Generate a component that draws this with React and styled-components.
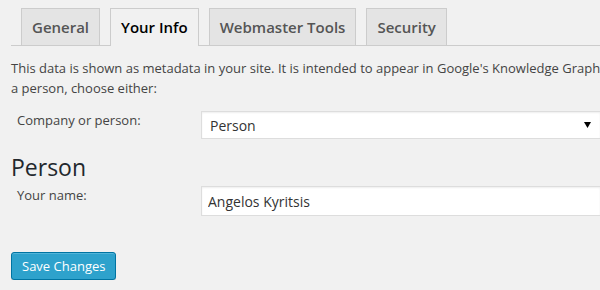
import React from "react";
import styled, { createGlobalStyle } from "styled-components";

const Global = createGlobalStyle`
  html, body { margin: 0; padding: 0; background: #f1f1f1; overflow: hidden; }
  body { font-family: "Open Sans", "Liberation Sans", sans-serif; color: #444; font-size: 13px; }
`;

const Wrap = styled.div`
  width: 900px;
  padding: 8px 0 0 11px;
`;

const TabBar = styled.nav`
  display: flex;
  align-items: flex-end;
  gap: 10px;
  padding-left: 10px;
  border-bottom: 1px solid #ccc;
  height: 37px;
`;

const Tab = styled.a`
  box-sizing: border-box;
  height: 37px;
  padding: 6px 10px 0;
  line-height: 24px;
  font-size: 15px;
  font-weight: 600;
  border: 1px solid #ccc;
  border-bottom: none;
  background: ${(p) => (p.$active ? "#f1f1f1" : "#e4e4e4")};
  color: ${(p) => (p.$active ? "#000" : "#555")};
  margin-bottom: ${(p) => (p.$active ? "-1px" : "0")};
  height: ${(p) => (p.$active ? "38px" : "37px")};
  text-decoration: none;
  white-space: nowrap;
`;

const Intro = styled.p`
  margin: 13px 0 13px;
  line-height: 19.5px;
  font-size: 13px;
  color: #444;
  white-space: nowrap;
`;

const Row = styled.div`
  display: grid;
  grid-template-columns: 190px 400px;
  align-items: start;
`;

const Label = styled.label`
  padding-left: 6px;
  line-height: 19.5px;
  font-size: 13px;
  color: #444;
`;

const SelectBox = styled.div`
  position: relative;
  box-sizing: border-box;
  height: 28px;
  background: #fff;
  border: 1px solid #ddd;
  box-shadow: inset 0 1px 2px rgba(0, 0, 0, 0.07);
  display: flex;
  align-items: center;
  padding-left: 8px;
  font-size: 14px;
  color: #333;
`;

const Arrow = styled.svg`
  position: absolute;
  right: 9px;
  top: 10px;
`;

const Heading = styled.h2`
  margin: 14px 0 4px;
  font-size: 23px;
  font-weight: 400;
  line-height: 29px;
  color: #23282d;
`;

const TextInput = styled.input`
  box-sizing: border-box;
  height: 30px;
  width: 400px;
  margin: 0;
  background: #fff;
  border: 1px solid #ddd;
  box-shadow: inset 0 1px 2px rgba(0, 0, 0, 0.07);
  padding: 0 6px;
  font-family: "Open Sans", "Liberation Sans", sans-serif;
  font-size: 14px;
  color: #333;
  outline: none;
`;

const Button = styled.button`
  margin-top: 36px;
  box-sizing: border-box;
  height: 28px;
  padding: 0 10px 1px;
  line-height: 26px;
  font-family: "Open Sans", "Liberation Sans", sans-serif;
  font-size: 13px;
  color: #fff;
  background: #2ea2cc;
  border: 1px solid #0074a2;
  border-radius: 3px;
  box-shadow: inset 0 1px 0 rgba(120, 200, 230, 0.5), 0 1px 0 rgba(0, 0, 0, 0.15);
  cursor: pointer;
`;

export default function App() {
  return (
    <>
      <Global />
      <Wrap>
        <TabBar>
          <Tab>General</Tab>
          <Tab $active>Your Info</Tab>
          <Tab>Webmaster Tools</Tab>
          <Tab>Security</Tab>
        </TabBar>
        <Intro>
          This data is shown as metadata in your site. It is intended to appear in Google's Knowledge Graph. You can be either a company, or
          <br />
          a person, choose either:
        </Intro>
        <Row>
          <Label>Company or person:</Label>
          <SelectBox>
            Person
            <Arrow width="7" height="6" viewBox="0 0 7 6">
              <path d="M0 0H7L3.5 6Z" fill="#000" />
            </Arrow>
          </SelectBox>
        </Row>
        <Heading>Person</Heading>
        <Row>
          <Label>Your name:</Label>
          <TextInput defaultValue="Angelos Kyritsis" />
        </Row>
        <Button>Save Changes</Button>
      </Wrap>
    </>
  );
}
